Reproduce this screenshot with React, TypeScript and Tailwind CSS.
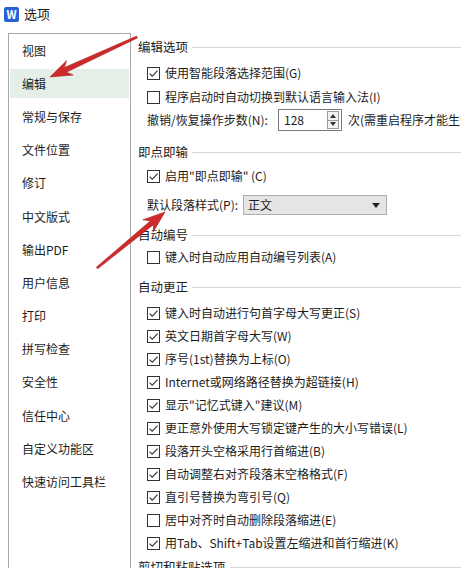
import type { ReactNode } from 'react';

const FONT = '"Noto Sans CJK SC", "Noto Sans", sans-serif';

const nav = [
  '视图',
  '编辑',
  '常规与保存',
  '文件位置',
  '修订',
  '中文版式',
  '输出PDF',
  '用户信息',
  '打印',
  '拼写检查',
  '安全性',
  '信任中心',
  '自定义功能区',
  '快速访问工具栏',
];

const autoCorrect: [string, boolean][] = [
  ['键入时自动进行句首字母大写更正(S)', true],
  ['英文日期首字母大写(W)', true],
  ['序号(1st)替换为上标(O)', true],
  ['Internet或网络路径替换为超链接(H)', true],
  ['显示"记忆式键入"建议(M)', true],
  ['更正意外使用大写锁定键产生的大小写错误(L)', true],
  ['段落开头空格采用行首缩进(B)', true],
  ['自动调整右对齐段落末空格格式(F)', true],
  ['直引号替换为弯引号(Q)', true],
  ['居中对齐时自动删除段落缩进(E)', false],
  ['用Tab、Shift+Tab设置左缩进和首行缩进(K)', true],
];

function Box({ checked }: { checked: boolean }) {
  return (
    <span className="flex h-[13px] w-[13px] shrink-0 items-center justify-center border border-[#333] bg-white">
      {checked ? (
        <svg width="11" height="11" viewBox="0 0 11 11">
          <path d="M1.6 5.6 L4.2 8.2 L9.6 2.6" fill="none" stroke="#333" strokeWidth="1.1" />
        </svg>
      ) : null}
    </span>
  );
}

function Check({ label, checked, h = 'h-[24px]' }: { label: string; checked: boolean; h?: string }) {
  return (
    <div className={`flex ${h} items-center gap-[5px] pl-[16px]`}>
      <Box checked={checked} />
      <span>{label}</span>
    </div>
  );
}

function Section({ title, className = '' }: { title: string; className?: string }) {
  return (
    <div className={`flex h-[20px] items-center pl-[7px] ${className}`}>
      <span className="text-[12.5px]">{title}</span>
      <span className="ml-[4px] h-px flex-1 bg-[#d6d6d6]" />
    </div>
  );
}

function Row({ children, className = '' }: { children: ReactNode; className?: string }) {
  return <div className={`flex items-center pl-[16px] ${className}`}>{children}</div>;
}

export default function App() {
  return (
    <div
      className="relative h-[568px] w-[461px] overflow-hidden bg-white text-[12px] text-[#1c1c1c]"
      style={{ fontFamily: FONT }}
    >
      <header className="flex h-[28px] items-center gap-[5px] pl-[4px]">
        <span className="flex h-[15px] w-[15px] items-center justify-center rounded-[2px] bg-[#2a62d6] text-[11px] font-bold leading-none text-white">
          W
        </span>
        <span className="text-[13px]">选项</span>
      </header>

      <div className="flex h-[540px] pt-[5px]">
        <aside className="ml-[8px] flex w-[123px] shrink-0 flex-col border border-b-0 border-[#a8a8a8] bg-white px-[1px]">
          {nav.map((label) => (
            <div key={label} className="flex h-[33.2px] items-center">
              <div
                className={`flex h-[29px] w-full items-center pl-[12px] ${
                  label === '编辑' ? 'bg-[#e6eee8]' : ''
                }`}
              >
                {label}
              </div>
            </div>
          ))}
        </aside>

        <main className="min-w-0 flex-1 overflow-hidden whitespace-nowrap pt-[4px]">
          <Section title="编辑选项" />
          <div className="mt-[4px]">
            <Check label="使用智能段落选择范围(G)" checked />
            <Check label="程序启动时自动切换到默认语言输入法(I)" checked={false} />
          </div>
          <Row className="h-[22px]">
            <span className="w-[131px] shrink-0">撤销/恢复操作步数(N):</span>
            <span className="flex h-[22px] w-[64px] shrink-0 items-center border border-[#7a7a7a] bg-white pl-[5px]">
              <span className="flex-1">128</span>
              <span className="mr-[2px] flex h-[18px] w-[12px] flex-col border border-[#9a9a9a] bg-[#f3f3f3]">
                <span className="flex flex-1 items-center justify-center border-b border-[#9a9a9a]">
                  <svg width="6" height="4" viewBox="0 0 6 4">
                    <path d="M0 4 L3 0 L6 4 Z" fill="#333" />
                  </svg>
                </span>
                <span className="flex flex-1 items-center justify-center">
                  <svg width="6" height="4" viewBox="0 0 6 4">
                    <path d="M0 0 L3 4 L6 0 Z" fill="#333" />
                  </svg>
                </span>
              </span>
            </span>
            <span className="ml-[6px]">次(需重启程序才能生效)</span>
          </Row>

          <Section title="即点即输" className="mt-[11px]" />
          <div className="mt-[2px]">
            <Check label={'启用"即点即输" (C)'} checked />
          </div>
          <Row className="mt-[6px] h-[22px]">
            <span className="w-[96px] shrink-0">默认段落样式(P):</span>
            <span className="flex h-[20px] w-[144px] shrink-0 items-center justify-between border border-[#adadad] bg-[#e5e5e5] pl-[4px] pr-[6px]">
              <span>正文</span>
              <svg width="8" height="5" viewBox="0 0 8 5">
                <path d="M0 0 L8 0 L4 5 Z" fill="#222" />
              </svg>
            </span>
          </Row>

          <Section title="自动编号" className="mt-[9px]" />
          <Check label="键入时自动应用自动编号列表(A)" checked={false} />

          <Section title="自动更正" className="mt-[8px]" />
          <div className="mt-[4.5px]">
            {autoCorrect.map(([label, checked]) => (
              <Check key={label} label={label} checked={checked} h="h-[23px]" />
            ))}
          </div>

          <Section title="剪切和粘贴选项" className="mt-[2.5px]" />
        </main>
      </div>

      {/* red annotation arrows */}
      <svg
        className="pointer-events-none absolute inset-0"
        width="461"
        height="568"
        viewBox="0 0 461 568"
      >
        <defs>
          <linearGradient id="ar" x1="0" y1="0" x2="1" y2="1">
            <stop offset="0" stopColor="#e23a3a" />
            <stop offset="1" stopColor="#b71c1c" />
          </linearGradient>
        </defs>
        <polygon
          points="136.6,36.1 64.4,67.6 66.6,60.6 50,77 73.2,75 66.4,72.2 137.4,37.9"
          fill="url(#ar)"
          stroke="#b01e1e"
          strokeWidth="0.6"
          strokeLinejoin="round"
        />
        <polygon
          points="97.6,268.8 153.5,224.7 153.1,232.2 165,212 142.9,219.8 150.3,220.9 96.4,267.2"
          fill="url(#ar)"
          stroke="#b01e1e"
          strokeWidth="0.6"
          strokeLinejoin="round"
        />
      </svg>
    </div>
  );
}
